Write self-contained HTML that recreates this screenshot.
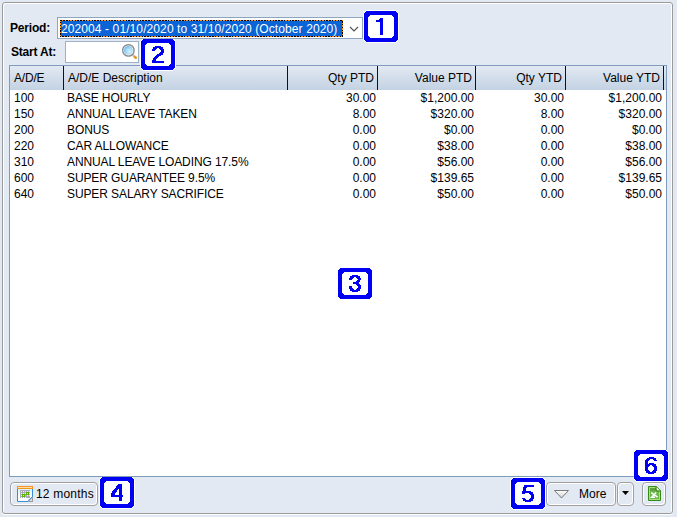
<!DOCTYPE html>
<html><head><meta charset="utf-8">
<style>
*{box-sizing:border-box;margin:0;padding:0}
html,body{width:677px;height:517px;overflow:hidden;background:#E3E9F2;font-family:"Liberation Sans",sans-serif;font-size:12px;color:#000}
.a{position:absolute}
.panel{left:2px;top:2px;width:671px;height:512px;border:1px solid #9B9B9B;border-radius:3px;box-shadow:inset 1px 1px 0 #fff,inset -1px 0 0 #fff,0 1px 0 #fff}
.lbl{font-weight:bold;letter-spacing:-0.2px;white-space:nowrap;line-height:14px}
.combo{z-index:3;left:57px;top:17px;width:306px;height:22px;background:#fff;border:1px solid #8FA6BF}
.sel{z-index:3;left:60px;top:20px;width:283px;height:17px;background:#0A64D6;border:1px solid transparent;border-image:repeating-linear-gradient(45deg,#000 0 1px,#F7931E 1px 2px) 1}
.field{left:65px;top:41px;width:74px;height:22px;background:#fff;border:1px solid #9DB1C8}
.table{left:9px;top:65px;width:658px;height:412px;background:#fff;border:1px solid #7F9CBD}
.hdr{left:0;top:0;width:656px;height:24px;background:linear-gradient(#E2E9F2,#C3D2E3)}
.div{top:0;width:1px;height:24px;background:#111}
.cell{white-space:nowrap;line-height:16px}
.r{text-align:right}
.btn{border:1px solid #A0A0A0;border-radius:4px;background:#E3E9F2;box-shadow:inset 1px 1px 0 #fff,inset -1px -1px 0 #fff}
</style></head><body>
<div class="a panel"></div>
<div class="a lbl" style="left:10px;top:21px">Period:</div>
<div class="a combo"></div>
<div class="a sel"></div>
<div class="a cell" style="z-index:3;left:61px;top:21px;color:#fff;letter-spacing:0.1px">202004 - 01/10/2020 to 31/10/2020 (October 2020)</div>
<svg class="a" style="z-index:3;left:349px;top:26px" width="11" height="7"><path d="M1 1 L5 5 L9 1" fill="none" stroke="#505050" stroke-width="1.1"/></svg>
<svg class="a" style="left:363px;top:10px;z-index:2" width="36" height="33" viewBox="-1 -1 36 33" shape-rendering="crispEdges">
<path d="M2 -1H32V0H33V1H34V2H35V29H34V30H33V31H32V32H2V31H1V30H0V29H-1V2H0V1H1V0H2Z" fill="#fff"/>
<path d="M2 0H32V1H33V2H34V29H33V30H32V31H2V30H1V29H0V2H1V1H2Z" fill="#0000F2"/>
<path d="M6 4H28V5H29V6H30V25H29V26H28V27H6V26H5V25H4V6H5V5H6Z" fill="#fff"/>
<path d="M16 7h3v1h-3zM15 8h4v1h-4zM12 9h7v1h-7zM12 10h7v1h-7zM16 11h3v1h-3zM16 12h3v1h-3zM16 13h3v1h-3zM16 14h3v1h-3zM16 15h3v1h-3zM16 16h3v1h-3zM16 17h3v1h-3zM16 18h3v1h-3zM16 19h3v1h-3zM16 20h3v1h-3zM16 21h3v1h-3zM16 22h3v1h-3zM16 23h3v1h-3z" fill="#0000F2"/></svg>
<div class="a lbl" style="left:11px;top:45px">Start At:</div>
<div class="a field"></div>
<svg class="a" style="left:122px;top:44px" width="16" height="16" viewBox="0 0 16 16">
 <defs><radialGradient id="gl" cx="0.62" cy="0.62" r="0.75"><stop offset="0" stop-color="#D6F4FF"/><stop offset="0.6" stop-color="#9AD4F6"/><stop offset="1" stop-color="#4DA8E8"/></radialGradient></defs>
 <path d="M10.5 10.5 L12.4 12.4" stroke="#C8C8C8" stroke-width="2.4"/>
 <path d="M12.8 12.8 L13.8 13.8" stroke="#E39A1C" stroke-width="2.6" stroke-linecap="round"/>
 <circle cx="6.4" cy="6.4" r="5.7" fill="#fff" stroke="#8A8A8A" stroke-width="1.4"/>
 <circle cx="6.4" cy="6.4" r="4.4" fill="url(#gl)"/>
</svg>
<svg class="a" style="left:140px;top:38px;z-index:2" width="36" height="33" viewBox="-1 -1 36 33" shape-rendering="crispEdges">
<path d="M2 -1H32V0H33V1H34V2H35V29H34V30H33V31H32V32H2V31H1V30H0V29H-1V2H0V1H1V0H2Z" fill="#fff"/>
<path d="M2 0H32V1H33V2H34V29H33V30H32V31H2V30H1V29H0V2H1V1H2Z" fill="#0000F2"/>
<path d="M6 4H28V5H29V6H30V25H29V26H28V27H6V26H5V25H4V6H5V5H6Z" fill="#fff"/>
<path d="M14 7h6v1h-6zM12 8h10v1h-10zM12 9h4v1h-4zM18 9h4v1h-4zM11 10h4v1h-4zM19 10h4v1h-4zM11 11h3v1h-3zM20 11h3v1h-3zM20 12h3v1h-3zM19 13h4v1h-4zM18 14h4v1h-4zM16 15h6v1h-6zM15 16h5v1h-5zM14 17h4v1h-4zM13 18h4v1h-4zM12 19h4v1h-4zM12 20h3v1h-3zM11 21h4v1h-4zM11 22h12v1h-12zM11 23h12v1h-12z" fill="#0000F2"/></svg>
<div class="a table">
 <div class="a hdr"></div>
 <div class="a div" style="left:53px"></div>
 <div class="a div" style="left:277px"></div>
 <div class="a div" style="left:367px"></div>
 <div class="a div" style="left:465px"></div>
 <div class="a div" style="left:555px"></div>
 <div class="a div" style="left:653px"></div>
 <div class="a cell" style="left:4px;top:4px;letter-spacing:-0.2px">A/D/E</div>
 <div class="a cell" style="left:58px;top:4px">A/D/E Description</div>
 <div class="a cell r" style="left:278px;width:86px;top:4px">Qty PTD</div>
 <div class="a cell r" style="left:368px;width:94px;top:4px">Value PTD</div>
 <div class="a cell r" style="left:466px;width:86px;top:4px">Qty YTD</div>
 <div class="a cell r" style="left:556px;width:94px;top:4px">Value YTD</div>
 <div class="a cell" style="left:4px;top:24px">100</div>
 <div class="a cell" style="left:57px;top:24px;letter-spacing:-0.1px">BASE HOURLY</div>
 <div class="a cell r" style="left:278px;width:88px;top:24px">30.00</div>
 <div class="a cell r" style="left:368px;width:96px;top:24px">$1,200.00</div>
 <div class="a cell r" style="left:466px;width:88px;top:24px">30.00</div>
 <div class="a cell r" style="left:556px;width:96px;top:24px">$1,200.00</div>
 <div class="a cell" style="left:4px;top:40px">150</div>
 <div class="a cell" style="left:57px;top:40px;letter-spacing:-0.1px">ANNUAL LEAVE TAKEN</div>
 <div class="a cell r" style="left:278px;width:88px;top:40px">8.00</div>
 <div class="a cell r" style="left:368px;width:96px;top:40px">$320.00</div>
 <div class="a cell r" style="left:466px;width:88px;top:40px">8.00</div>
 <div class="a cell r" style="left:556px;width:96px;top:40px">$320.00</div>
 <div class="a cell" style="left:4px;top:56px">200</div>
 <div class="a cell" style="left:57px;top:56px;letter-spacing:-0.1px">BONUS</div>
 <div class="a cell r" style="left:278px;width:88px;top:56px">0.00</div>
 <div class="a cell r" style="left:368px;width:96px;top:56px">$0.00</div>
 <div class="a cell r" style="left:466px;width:88px;top:56px">0.00</div>
 <div class="a cell r" style="left:556px;width:96px;top:56px">$0.00</div>
 <div class="a cell" style="left:4px;top:72px">220</div>
 <div class="a cell" style="left:57px;top:72px;letter-spacing:-0.1px">CAR ALLOWANCE</div>
 <div class="a cell r" style="left:278px;width:88px;top:72px">0.00</div>
 <div class="a cell r" style="left:368px;width:96px;top:72px">$38.00</div>
 <div class="a cell r" style="left:466px;width:88px;top:72px">0.00</div>
 <div class="a cell r" style="left:556px;width:96px;top:72px">$38.00</div>
 <div class="a cell" style="left:4px;top:88px">310</div>
 <div class="a cell" style="left:57px;top:88px;letter-spacing:-0.1px">ANNUAL LEAVE LOADING 17.5%</div>
 <div class="a cell r" style="left:278px;width:88px;top:88px">0.00</div>
 <div class="a cell r" style="left:368px;width:96px;top:88px">$56.00</div>
 <div class="a cell r" style="left:466px;width:88px;top:88px">0.00</div>
 <div class="a cell r" style="left:556px;width:96px;top:88px">$56.00</div>
 <div class="a cell" style="left:4px;top:104px">600</div>
 <div class="a cell" style="left:57px;top:104px;letter-spacing:-0.1px">SUPER GUARANTEE 9.5%</div>
 <div class="a cell r" style="left:278px;width:88px;top:104px">0.00</div>
 <div class="a cell r" style="left:368px;width:96px;top:104px">$139.65</div>
 <div class="a cell r" style="left:466px;width:88px;top:104px">0.00</div>
 <div class="a cell r" style="left:556px;width:96px;top:104px">$139.65</div>
 <div class="a cell" style="left:4px;top:120px">640</div>
 <div class="a cell" style="left:57px;top:120px;letter-spacing:-0.1px">SUPER SALARY SACRIFICE</div>
 <div class="a cell r" style="left:278px;width:88px;top:120px">0.00</div>
 <div class="a cell r" style="left:368px;width:96px;top:120px">$50.00</div>
 <div class="a cell r" style="left:466px;width:88px;top:120px">0.00</div>
 <div class="a cell r" style="left:556px;width:96px;top:120px">$50.00</div>
</div>
<svg class="a" style="left:337px;top:267px;z-index:2" width="36" height="33" viewBox="-1 -1 36 33" shape-rendering="crispEdges">
<path d="M2 -1H32V0H33V1H34V2H35V29H34V30H33V31H32V32H2V31H1V30H0V29H-1V2H0V1H1V0H2Z" fill="#fff"/>
<path d="M2 0H32V1H33V2H34V29H33V30H32V31H2V30H1V29H0V2H1V1H2Z" fill="#0000F2"/>
<path d="M6 4H28V5H29V6H30V25H29V26H28V27H6V26H5V25H4V6H5V5H6Z" fill="#fff"/>
<path d="M14 7h6v1h-6zM12 8h10v1h-10zM12 9h4v1h-4zM18 9h4v1h-4zM11 10h4v1h-4zM19 10h4v1h-4zM11 11h3v1h-3zM20 11h3v1h-3zM19 12h3v1h-3zM18 13h4v1h-4zM15 14h6v1h-6zM15 15h6v1h-6zM18 16h4v1h-4zM19 17h4v1h-4zM11 18h3v1h-3zM20 18h3v1h-3zM11 19h3v1h-3zM20 19h3v1h-3zM11 20h4v1h-4zM19 20h4v1h-4zM12 21h4v1h-4zM18 21h4v1h-4zM12 22h10v1h-10zM14 23h6v1h-6z" fill="#0000F2"/></svg>
<div class="a btn" style="left:10px;top:482px;width:88px;height:24px"></div>
<svg class="a" style="left:17px;top:486px" width="16" height="16" viewBox="0 0 16 16" shape-rendering="crispEdges">
 <defs><linearGradient id="cg" x1="0" y1="0" x2="0" y2="1"><stop offset="0" stop-color="#D2F4FF"/><stop offset="0.55" stop-color="#FFFFFF"/></linearGradient></defs>
 <path d="M0 2H16V11L11 16H1Q0 16 0 15Z" fill="#3A8ED4" shape-rendering="auto"/>
 <path d="M1 3H15V10.6L10.6 15H1Z" fill="url(#cg)" shape-rendering="auto"/>
 <rect x="0" y="0" width="16" height="3" fill="#F7941D"/>
 <rect x="1" y="1" width="14" height="1" fill="#FFDDB0"/>
 <rect x="3" y="4" width="10" height="8" fill="#A9ABB8"/>
 <path d="M4 5h1v1h-1zM6 5h1v1h-1zM8 5h1v1h-1zM10 5h1v1h-1zM12 5h1v1h-1zM4 7h1v1h-1zM6 7h1v1h-1zM8 7h1v1h-1zM12 7h1v1h-1zM4 9h1v1h-1zM10 9h1v1h-1zM12 9h1v1h-1zM4 11h1v1h-1zM6 11h1v1h-1zM8 11h1v1h-1z" fill="#EEEEFF"/>
 <rect x="5" y="8" width="3" height="3" fill="#5DB000"/>
 <rect x="9" y="6" width="3" height="3" fill="#5DB000"/>
 <rect x="6" y="9" width="1" height="1" fill="#D4F070"/>
 <rect x="10" y="7" width="1" height="1" fill="#D4F070"/>
 <path d="M11 16 L16 11 V16 Z" fill="#9C9C9C" shape-rendering="auto"/>
 <path d="M12.6 15 L15 12.6 V15 Z" fill="#E6E6E6" shape-rendering="auto"/>
</svg>
<div class="a cell" style="left:36px;top:486px;letter-spacing:0.2px">12 months</div>
<svg class="a" style="left:99px;top:476px;z-index:2" width="36" height="33" viewBox="-1 -1 36 33" shape-rendering="crispEdges">
<path d="M2 -1H32V0H33V1H34V2H35V29H34V30H33V31H32V32H2V31H1V30H0V29H-1V2H0V1H1V0H2Z" fill="#fff"/><rect x="-1" y="-1" width="36" height="1" fill="#7F9CBD"/>
<path d="M2 0H32V1H33V2H34V29H33V30H32V31H2V30H1V29H0V2H1V1H2Z" fill="#0000F2"/>
<path d="M6 4H28V5H29V6H30V25H29V26H28V27H6V26H5V25H4V6H5V5H6Z" fill="#fff"/>
<path d="M18 7h4v1h-4zM17 8h5v1h-5zM16 9h6v1h-6zM16 10h6v1h-6zM15 11h7v1h-7zM14 12h4v1h-4zM19 12h3v1h-3zM13 13h4v1h-4zM19 13h3v1h-3zM12 14h5v1h-5zM19 14h3v1h-3zM12 15h4v1h-4zM19 15h3v1h-3zM11 16h4v1h-4zM19 16h3v1h-3zM11 17h4v1h-4zM19 17h3v1h-3zM11 18h12v1h-12zM11 19h12v1h-12zM19 20h3v1h-3zM19 21h3v1h-3zM19 22h3v1h-3zM19 23h3v1h-3z" fill="#0000F2"/></svg>
<svg class="a" style="left:510px;top:477px;z-index:2" width="36" height="33" viewBox="-1 -1 36 33" shape-rendering="crispEdges">
<path d="M2 -1H32V0H33V1H34V2H35V29H34V30H33V31H32V32H2V31H1V30H0V29H-1V2H0V1H1V0H2Z" fill="#fff"/>
<path d="M2 0H32V1H33V2H34V29H33V30H32V31H2V30H1V29H0V2H1V1H2Z" fill="#0000F2"/>
<path d="M6 4H28V5H29V6H30V25H29V26H28V27H6V26H5V25H4V6H5V5H6Z" fill="#fff"/>
<path d="M13 7h10v1h-10zM13 8h10v1h-10zM12 9h4v1h-4zM12 10h3v1h-3zM12 11h3v1h-3zM12 12h3v1h-3zM11 13h9v1h-9zM11 14h11v1h-11zM11 15h3v1h-3zM18 15h4v1h-4zM19 16h4v1h-4zM20 17h3v1h-3zM20 18h3v1h-3zM20 19h3v1h-3zM11 20h3v1h-3zM19 20h4v1h-4zM12 21h3v1h-3zM18 21h4v1h-4zM12 22h10v1h-10zM14 23h6v1h-6z" fill="#0000F2"/></svg>
<div class="a btn" style="left:546px;top:482px;width:70px;height:24px"></div>
<svg class="a" style="left:553px;top:489px" width="17" height="11"><defs><linearGradient id="tg" x1="0" y1="0" x2="0" y2="1"><stop offset="0" stop-color="#fff"/><stop offset="1" stop-color="#D0D0D0"/></linearGradient></defs><path d="M1.5 1.5 L15.5 1.5 L8.5 9 Z" fill="url(#tg)" stroke="#7A7A7A"/></svg>
<div class="a cell" style="left:579px;top:486px">More</div>
<div class="a btn" style="left:617px;top:482px;width:17px;height:24px"></div>
<svg class="a" style="left:621px;top:490px" width="10" height="7"><path d="M1 1 L8 1 L4.5 5 Z" fill="#000"/></svg>
<div class="a btn" style="left:642px;top:482px;width:24px;height:24px"></div>
<svg class="a" style="left:648px;top:486px" width="13" height="15" viewBox="0 0 13 15">
 <path d="M0.5 0.5 H8.5 L12.5 4.5 V14.5 H0.5 Z" fill="#6DB94B" stroke="#3A8A1A"/>
 <path d="M1.5 1.5 H8 L11.5 5 V13.5 H1.5 Z" fill="none" stroke="#A6DD86"/>
 <rect x="2" y="2" width="6" height="3" fill="#5E9F3E"/>
 <path d="M8.5 1 L12 4.5 H9.5 Q8.5 4.5 8.5 3.5 Z" fill="#fff"/>
 <path d="M8 1 V3.5 Q8 5 9.5 5 H12" fill="none" stroke="#2F7A12" stroke-width="1"/>
 <path d="M3.2 6.6 L9.6 11.2 M8.2 6.4 L3.6 11.2 H7" fill="none" stroke="#fff" stroke-width="1.5"/>
</svg>
<svg class="a" style="left:633px;top:449px;z-index:2" width="36" height="33" viewBox="-1 -1 36 33" shape-rendering="crispEdges">
<path d="M2 -1H32V0H33V1H34V2H35V29H34V30H33V31H32V32H2V31H1V30H0V29H-1V2H0V1H1V0H2Z" fill="#fff"/><rect x="-1" y="26" width="1" height="1" fill="#7F9CBD"/>
<path d="M2 0H32V1H33V2H34V29H33V30H32V31H2V30H1V29H0V2H1V1H2Z" fill="#0000F2"/>
<path d="M6 4H28V5H29V6H30V25H29V26H28V27H6V26H5V25H4V6H5V5H6Z" fill="#fff"/>
<path d="M15 7h5v1h-5zM13 8h9v1h-9zM12 9h4v1h-4zM19 9h3v1h-3zM11 10h4v1h-4zM20 10h3v1h-3zM11 11h3v1h-3zM11 12h3v1h-3zM11 13h3v1h-3zM15 13h5v1h-5zM11 14h11v1h-11zM11 15h5v1h-5zM18 15h4v1h-4zM11 16h4v1h-4zM19 16h4v1h-4zM11 17h3v1h-3zM20 17h3v1h-3zM11 18h3v1h-3zM20 18h3v1h-3zM11 19h3v1h-3zM20 19h3v1h-3zM11 20h4v1h-4zM19 20h4v1h-4zM12 21h4v1h-4zM18 21h4v1h-4zM12 22h10v1h-10zM14 23h6v1h-6z" fill="#0000F2"/></svg>
</body></html>
